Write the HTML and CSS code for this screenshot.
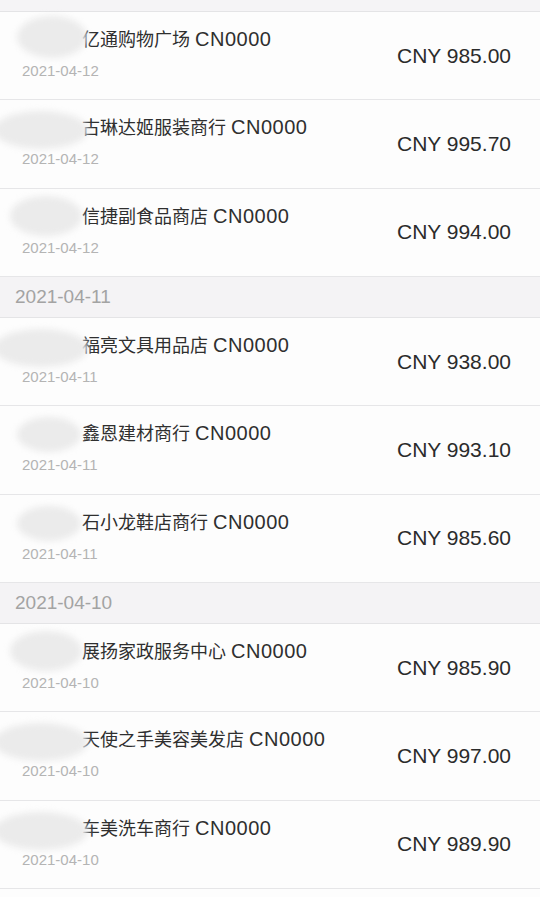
FILE: index.html
```html
<!DOCTYPE html>
<html lang="zh-CN">
<head>
    <meta charset="UTF-8">
    <meta name="viewport" content="width=device-width, initial-scale=1.0">
    <title>交易记录</title>
    <link rel="stylesheet" href="styles.css">
</head>
<body>
    <div class="list">
        <div class="top-gap"></div>

        <div class="item">
            <div class="blob blob-tall"></div>
            <div class="info">
                <div class="name">亿通购物广场 <span class="code">CN0000</span></div>
                <div class="date">2021-04-12</div>
            </div>
            <div class="amount">CNY 985.00</div>
        </div>
        <div class="item">
            <div class="blob blob-wide"></div>
            <div class="info">
                <div class="name">古琳达姬服装商行 <span class="code">CN0000</span></div>
                <div class="date">2021-04-12</div>
            </div>
            <div class="amount">CNY 995.70</div>
        </div>
        <div class="item">
            <div class="blob blob-left"></div>
            <div class="info">
                <div class="name">信捷副食品商店 <span class="code">CN0000</span></div>
                <div class="date">2021-04-12</div>
            </div>
            <div class="amount">CNY 994.00</div>
        </div>

        <div class="section">2021-04-11</div>

        <div class="item">
            <div class="blob blob-wide"></div>
            <div class="info">
                <div class="name">福亮文具用品店 <span class="code">CN0000</span></div>
                <div class="date">2021-04-11</div>
            </div>
            <div class="amount">CNY 938.00</div>
        </div>
        <div class="item">
            <div class="blob"></div>
            <div class="info">
                <div class="name">鑫恩建材商行 <span class="code">CN0000</span></div>
                <div class="date">2021-04-11</div>
            </div>
            <div class="amount">CNY 993.10</div>
        </div>
        <div class="item">
            <div class="blob"></div>
            <div class="info">
                <div class="name">石小龙鞋店商行 <span class="code">CN0000</span></div>
                <div class="date">2021-04-11</div>
            </div>
            <div class="amount">CNY 985.60</div>
        </div>

        <div class="section">2021-04-10</div>

        <div class="item">
            <div class="blob blob-left"></div>
            <div class="info">
                <div class="name">展扬家政服务中心 <span class="code">CN0000</span></div>
                <div class="date">2021-04-10</div>
            </div>
            <div class="amount">CNY 985.90</div>
        </div>
        <div class="item">
            <div class="blob blob-wide"></div>
            <div class="info">
                <div class="name">天使之手美容美发店 <span class="code">CN0000</span></div>
                <div class="date">2021-04-10</div>
            </div>
            <div class="amount">CNY 997.00</div>
        </div>
        <div class="item">
            <div class="blob blob-wide"></div>
            <div class="info">
                <div class="name">车美洗车商行 <span class="code">CN0000</span></div>
                <div class="date">2021-04-10</div>
            </div>
            <div class="amount">CNY 989.90</div>
        </div>
        <div class="item"></div>
    </div>
</body>
</html>
```

FILE: styles.css
```css
body {
    margin: 0;
    background-color: #fdfdfd;
    font-family: "Liberation Sans", "Noto Sans CJK SC", sans-serif;
    color: #333333;
}
.list {
    width: 540px;
    height: 897px;
    overflow: hidden;
}
.top-gap {
    height: 11px;
    background-color: #f5f4f6;
    border-bottom: 1px solid #e4e4e6;
}
.item {
    position: relative;
    display: flex;
    align-items: center;
    justify-content: space-between;
    height: 87.33px;
    padding: 0 29px 0 22px;
    border-bottom: 1px solid #e6e6e8;
    background-color: #fdfdfd;
}
.info {
    display: flex;
    flex-direction: column;
    align-self: flex-start;
    padding-top: 15px;
}
.name {
    font-size: 18px;
    line-height: 24px;
    padding-left: 60px;
    white-space: nowrap;
    color: #2f2f2f;
}
.code {
    font-size: 20px;
    letter-spacing: 0.5px;
}
.date {
    font-size: 15px;
    line-height: 20px;
    margin-top: 9px;
    color: #b4b4b4;
}
.amount {
    font-size: 21px;
    color: #2b2b2b;
}
.section {
    height: 40px;
    line-height: 40px;
    padding-left: 15px;
    font-size: 19px;
    color: #a3a3a3;
    background-color: #f4f3f5;
    border-bottom: 1px solid #e4e4e6;
}
.blob {
    position: absolute;
    left: 17px;
    top: 11px;
    width: 64px;
    height: 35px;
    border-radius: 50%;
    background-color: #ebebeb;
    filter: blur(3px);
}
.blob-tall {
    top: 4px;
    width: 70px;
    height: 42px;
}
.blob-wide {
    left: -6px;
    width: 94px;
    height: 38px;
}
.blob-left {
    left: 10px;
    width: 72px;
    height: 40px;
    top: 7px;
}
```
